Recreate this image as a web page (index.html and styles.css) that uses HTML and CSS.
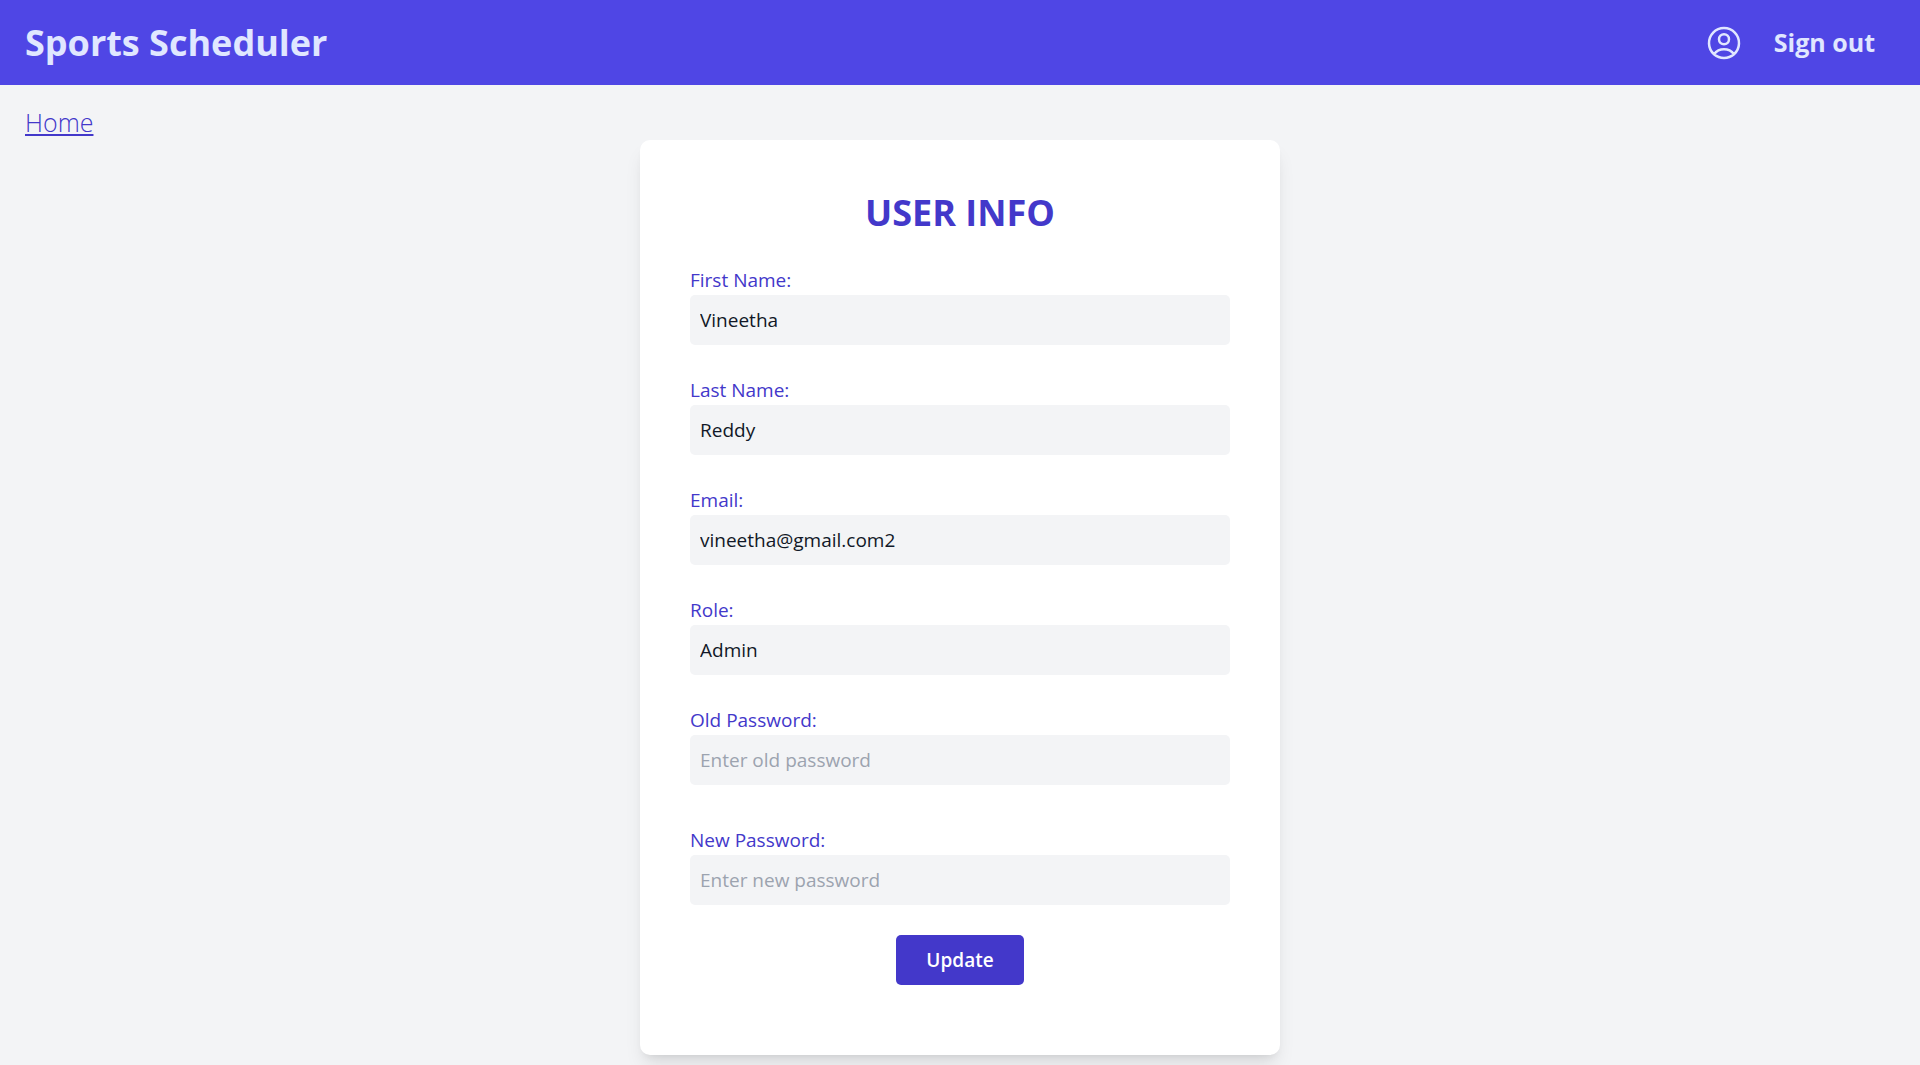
FILE: index.html
```html
<!DOCTYPE html>
<html lang="en">
<head>
  <meta charset="utf-8">
  <meta name="viewport" content="width=device-width, initial-scale=1">
  <title>Sports Scheduler</title>
  <link rel="stylesheet" href="styles.css">
</head>
<body>
  <header class="topbar">
    <h1 class="brand">Sports Scheduler</h1>
    <nav class="topbar-actions">
      <a class="profile-link" href="#" aria-label="Profile">
        <svg class="profile-icon" viewBox="0 0 24 24" fill="none" stroke="currentColor" stroke-width="1.5" stroke-linecap="round" stroke-linejoin="round" aria-hidden="true">
          <path d="M17.982 18.725A7.488 7.488 0 0012 15.75a7.488 7.488 0 00-5.982 2.975m11.963 0a9 9 0 10-11.963 0m11.963 0A8.966 8.966 0 0112 21a8.966 8.966 0 01-5.982-2.275M15 9.75a3 3 0 11-6 0 3 3 0 016 0z"/>
        </svg>
      </a>
      <a class="signout" href="#">Sign out</a>
    </nav>
  </header>
  <nav class="crumbs"><a class="home-link" href="#">Home</a></nav>
  <main class="page">
    <form class="card">
      <h2 class="card-title">USER INFO</h2>
      <div class="field">
        <label for="first-name">First Name:</label>
        <input id="first-name" type="text" value="Vineetha">
      </div>
      <div class="field">
        <label for="last-name">Last Name:</label>
        <input id="last-name" type="text" value="Reddy">
      </div>
      <div class="field">
        <label for="email">Email:</label>
        <input id="email" type="text" value="vineetha@gmail.com2">
      </div>
      <div class="field">
        <label for="role">Role:</label>
        <input id="role" type="text" value="Admin" readonly>
      </div>
      <div class="field field-spaced">
        <label for="old-password">Old Password:</label>
        <input id="old-password" type="password" placeholder="Enter old password">
      </div>
      <div class="field">
        <label for="new-password">New Password:</label>
        <input id="new-password" type="password" placeholder="Enter new password">
      </div>
      <button class="update" type="button">Update</button>
    </form>
  </main>
</body>
</html>
```
FILE: styles.css
```css
*, *::before, *::after { box-sizing: border-box; }

body {
  margin: 0;
  background: #f3f4f6;
  color: #111827;
  font-family: "Open Sans", "Noto Sans", sans-serif;
  font-size: 19px;
  line-height: 30px;
}

h1, h2 { margin: 0; }

.topbar {
  display: flex;
  align-items: center;
  justify-content: space-between;
  padding: 20px 45px 20px 25px;
  background: #4f46e5;
  color: #e0e7ff;
}

.brand {
  font-size: 36px;
  line-height: 45px;
  font-weight: 700;
}

.topbar-actions {
  display: flex;
  align-items: center;
  gap: 30px;
}

.profile-link { display: block; color: inherit; }

.profile-icon {
  display: block;
  width: 40px;
  height: 40px;
}

.signout {
  color: inherit;
  font-size: 25px;
  line-height: 35px;
  font-weight: 700;
  text-decoration: none;
}

.crumbs {
  display: flex;
  padding: 20px 25px 0;
}

.home-link {
  color: #4338ca;
  font-size: 25px;
  line-height: 35px;
  font-weight: 300;
  text-decoration-thickness: 2px;
  text-underline-offset: 2px;
}

.page { padding: 0 25px 10px; }

.card {
  display: flex;
  flex-direction: column;
  max-width: 640px;
  margin: 0 auto;
  padding: 50px 50px 70px;
  background: #fff;
  border-radius: 10px;
  box-shadow: 0 13px 19px -4px rgba(0, 0, 0, 0.1), 0 5px 8px -5px rgba(0, 0, 0, 0.1);
}

.card-title {
  margin-bottom: 30px;
  color: #4338ca;
  font-size: 36px;
  line-height: 45px;
  font-weight: 700;
  text-align: center;
}

.field {
  display: flex;
  flex-direction: column;
  margin-bottom: 30px;
}

.field-spaced { margin-bottom: 40px; }

.field label { color: #4338ca; }

.field input {
  width: 100%;
  height: 50px;
  padding: 10px;
  border: 0;
  border-radius: 5px;
  background: #f3f4f6;
  color: inherit;
  font: inherit;
}

.field input::placeholder { color: #9ca3af; opacity: 1; }

.update {
  align-self: center;
  padding: 10px 30px;
  border: 0;
  border-radius: 5px;
  background: #4338ca;
  color: #fff;
  font: inherit;
  font-weight: 600;
}
```
